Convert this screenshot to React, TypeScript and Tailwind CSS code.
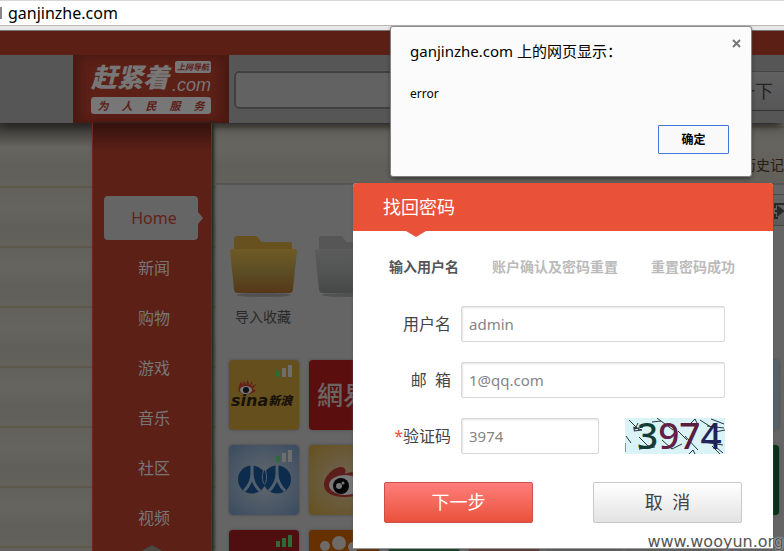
import type { ReactNode } from "react";

const cjk = "font-['Noto_Sans','Noto_Sans_CJK_SC',sans-serif]";

const navItems = ["Home", "新闻", "购物", "游戏", "音乐", "社区", "视频"];

function AddressBar() {
  return (
    <div className="h-[31px] shrink-0 border-t border-b border-t-[#d8d8d8] border-b-[#777] bg-[#e8e8e8]">
      <div className="flex h-[25px] items-center border-b border-[#b9b9b9] bg-white">
        <span className="mr-1.5 h-[12px] w-[2px] bg-[#888]" />
        <span className="text-[16px] leading-[22px] text-black">ganjinzhe.com</span>
      </div>
    </div>
  );
}

function Logo() {
  return (
    <div className="h-full w-[156px] shrink-0 bg-[#5c2017] px-[18px] pt-[2px] text-[#777] shadow-[inset_8px_0_10px_#4a1a13,inset_-8px_0_10px_#4a1a13]">
      <div className="flex h-[40px] justify-between">
        <span className="shrink-0 text-[26px] leading-[40px] font-black whitespace-nowrap italic">赶紧着</span>
        <div className="flex flex-col items-end">
          <span className="mt-[4px] rounded-[2px] bg-[#777] px-[2px] text-[8px] leading-[12px] font-bold whitespace-nowrap text-[#5c2017] italic">
            上网导航
          </span>
          <span className="font-['Liberation_Sans',sans-serif] text-[18px] leading-[24px] italic">.com</span>
        </div>
      </div>
      <div className="flex h-[17px] items-center justify-around rounded-[3px] bg-[#777] text-[11px] leading-[16px] font-bold text-[#5c2017] italic">
        {["为", "人", "民", "服", "务"].map((c) => (
          <span key={c}>{c}</span>
        ))}
      </div>
    </div>
  );
}

function Header() {
  return (
    <header className="relative shrink-0 shadow-[0_6px_8px_-3px_#222]">
      <div className="h-[24px] bg-[#5c1f16]" />
      <div className="flex h-[68px] bg-[#565656]">
        <div className="w-[73px] shrink-0" />
        <Logo />
        <div className="flex grow items-start gap-1 pt-[16px] pl-[5px]">
          <input
            aria-label="搜索"
            className="h-[38px] w-[440px] shrink-0 rounded-[5px] border-2 border-[#404040] bg-[#626262] shadow-[0_0_1px_#777]"
          />
          <button className="h-[40px] grow border-t border-b border-t-[#444] border-b-[#333] bg-linear-to-b from-[#616161] to-[#565656] pl-[23px] text-left text-[18px] whitespace-nowrap text-[#222]">
            百度一下
          </button>
        </div>
      </div>
    </header>
  );
}

function Sidebar() {
  return (
    <nav className="relative h-[430px] w-[120px] shrink-0 border-x border-[#6b2a22] bg-[#5c2017] bg-linear-to-b from-[#32120d] to-transparent to-[28px] pt-[73px] pl-[11px] shadow-[2px_0_3px_#222]">
      <ul className="flex flex-col gap-[6px]">
        {navItems.map((name, i) => (
          <li key={name}>
            <a
              href="#"
              className={
                i === 0
                  ? "relative flex h-[44px] w-[94px] items-center justify-center rounded-[4px] bg-[#656565] pl-[6px] text-[16px] text-[#642118]"
                  : "flex h-[44px] w-[94px] items-center justify-center pl-[6px] text-[16px] text-[#777]"
              }
            >
              {name}
              {i === 0 && (
                <span className="absolute top-[16px] left-full border-y-[6px] border-l-[5px] border-y-transparent border-l-[#656565]" />
              )}
            </a>
          </li>
        ))}
      </ul>
      <svg className="absolute bottom-0 left-[45px]" width="28" height="8" viewBox="0 0 28 8">
        <path d="M0 8 14 0l14 8z" fill="#4a4944" />
      </svg>
    </nav>
  );
}

function Folder({ id, top, mid, bottom, tab }: { id: string; top: string; mid: string; bottom: string; tab: string }) {
  return (
    <svg width="70" height="64" viewBox="0 0 70 64" aria-hidden="true">
      <defs>
        <linearGradient id={id} x1="0" y1="0" x2="0" y2="1">
          <stop offset="0" stopColor={top} />
          <stop offset=".5" stopColor={mid} />
          <stop offset="1" stopColor={bottom} />
        </linearGradient>
      </defs>
      <ellipse cx="35" cy="60" rx="27" ry="2" fill="#484848" opacity=".7" />
      <path d="M5 18V4q0-3 3-3h18q3 0 4 3l2 3h29q2 0 2 2v9z" fill={tab} />
      <path d="M2 14h64q2 0 2 2l-4 38q0 4-4 4H9q-4 0-4-4L1 16q0-2 1-2z" fill={`url(#${id})`} />
      <path d="M2 15h65" stroke={top} strokeWidth="1" />
    </svg>
  );
}

function Bars({ level }: { level: number }) {
  return (
    <svg className="absolute top-[5px] right-[7px]" width="16" height="12" viewBox="0 0 16 12" aria-hidden="true">
      <path d="M0 6h4v6H0z" fill="#2b6b35" />
      <path d="M6 3h4v9H6z" fill={level > 1 ? "#2b6b35" : "#6e6e6e"} />
      <path d="M12 0h4v12h-4z" fill={level > 2 ? "#2b6b35" : "#6e6e6e"} />
    </svg>
  );
}

function Tile({ color, children }: { color: string; children?: ReactNode }) {
  return (
    <a href="#" className={`relative block h-[70px] w-[70px] overflow-hidden rounded-[4px] shadow-[0_0_3px_#484848] ${color}`}>
      {children}
    </a>
  );
}

function SinaArt() {
  return (
    <div className="flex h-full flex-col">
      <svg className="mt-[20px] ml-[9px]" width="20" height="14" viewBox="0 0 20 14" aria-hidden="true">
        <path d="M1 12C-1 6 3 4 2 2c3 1 2 2 3 3 1-2 0-3 0-4 3 1 2 3 3 4 1-2 1-3 1-5 3 2 1 4 2 5 2-1 2-3 3-4 1 2-1 4-1 5 2 0 3-1 5-2-1 3-3 3-3 5 1 1 2 1 3 1-1 2-5 4-8 4z" fill="#65201a" />
        <ellipse cx="8" cy="10" rx="6" ry="4" fill="#777" />
        <circle cx="8" cy="10" r="3" fill="#111" />
      </svg>
      <div className="flex items-center pl-[2px] leading-[14px] text-[#17120c]">
        <span className="font-['DejaVu_Sans'] text-[16px] font-bold italic">sina</span>
        <span className="text-[12px] font-black whitespace-nowrap italic">新浪</span>
      </div>
    </div>
  );
}

function RenrenArt() {
  return (
    <svg className="mt-[19px] ml-[9px]" width="53" height="31" viewBox="0 0 53 31" aria-hidden="true">
      <ellipse cx="14" cy="15.500" rx="14" ry="14" fill="#0c2b4d" />
      <ellipse cx="39" cy="15.500" rx="14" ry="14" fill="#0c2b4d" />
      <path d="M14 0v9q0 10-8 18M14 9q0 10 8 18M39 0v9q0 10-8 18M39 9q0 10 8 18" fill="none" stroke="#52606d" strokeWidth="3" />
      <ellipse cx="26.500" cy="13" rx="2" ry="7" fill="#0c2b4d" stroke="#52606d" />
    </svg>
  );
}

function WeiboArt() {
  return (
    <svg className="mt-[14px] ml-[14px]" width="56" height="40" viewBox="0 0 56 40" aria-hidden="true">
      <path d="M1 26C1 17 11 8 18 8c5 0 5 4 4 7 7-3 14-2 13 4 6 1 9 4 8 9-2 9-14 10-22 10C10 38 1 34 1 26z" fill="#5d1d1a" />
      <ellipse cx="22" cy="26" rx="16" ry="10" fill="#777" />
      <circle cx="18" cy="27" r="8" fill="#050505" />
      <circle cx="16" cy="27" r="3" fill="#777" />
      <circle cx="20" cy="24" r="1.500" fill="#777" />
      <path d="M30 4c10-1 16 5 14 14" fill="none" stroke="#663614" strokeWidth="3" />
    </svg>
  );
}

function BaoArt() {
  return (
    <svg className="mt-[5px] ml-[8px]" width="48" height="30" viewBox="0 0 48 30" aria-hidden="true">
      <circle cx="8" cy="11" r="5" fill="#6d6a67" />
      <circle cx="22" cy="8" r="7" fill="#6d6a67" />
      <circle cx="36" cy="12" r="5" fill="#6d6a67" />
      <path d="M3 30q17-24 34 0z" fill="#6d6a67" />
    </svg>
  );
}

function Content() {
  return (
    <main className="min-w-0 grow pl-[4px]">
      <div className="flex h-[60px] items-center justify-end">
        <a href="#" className="mt-[22px] text-[14px] whitespace-nowrap text-[#2b1a10]">
          历史记
        </a>
      </div>
      <section className="h-[400px] border-t-2 border-[#555] bg-[#656565] pl-[13px]">
        <div className="flex h-[50px] items-start justify-end pt-[9px]">
          <button aria-label="切换" className="flex h-[32px] w-[30px] items-center justify-end border-y border-[#484848] bg-linear-to-b from-[#656565] to-[#5a5a5a]">
            <svg width="10" height="17" viewBox="0 0 10 17">
              <path d="M1 6V2h9M1 12v4h3" fill="none" stroke="#292929" strokeWidth="2" />
              <path d="M1 9h4M4 5l5 4-5 4z" fill="#292929" stroke="#292929" strokeWidth="2" />
            </svg>
          </button>
        </div>
        <div className="flex gap-[15px]">
          <div className="w-[70px]">
            <Folder id="gold" top="#705b25" mid="#5c4e24" bottom="#573719" tab="#67521f" />
            <div className="mt-[8px] pl-[6px] text-[14px] leading-[20px] text-[#292929]">导入收藏</div>
          </div>
          <div className="w-[70px]">
            <Folder id="grey" top="#5c5c5c" mid="#535454" bottom="#464747" tab="#565656" />
          </div>
        </div>
        <div className="mt-[33px] grid grid-cols-[repeat(auto-fill,70px)] gap-x-[10px] gap-y-[15px]">
          <Tile color="bg-[#65501d]">
            <Bars level={1} />
            <SinaArt />
          </Tile>
          <Tile color="bg-[#5a0e0e]">
            <span className="ml-[8px] block text-[26px] leading-[70px] font-medium whitespace-nowrap text-[#6d6464]">網易</span>
          </Tile>
          <Tile color="bg-[#5a0e0e]" />
          <Tile color="bg-[#65501d]" />
          <Tile color="bg-[#5c5c5c]" />
          <Tile color="bg-[#5c5c5c]" />
          <Tile color="bg-linear-to-b from-[#53636b] to-[#566067]" />
          <Tile color="bg-radial from-[#64686c] to-[#3a4c60]">
            <Bars level={1} />
            <RenrenArt />
          </Tile>
          <Tile color="bg-radial from-[#6e6452] to-[#65501d]">
            <WeiboArt />
          </Tile>
          <Tile color="bg-[#65501d]" />
          <Tile color="bg-[#5a0e0e]" />
          <Tile color="bg-[#5c5c5c]" />
          <Tile color="bg-[#5c5c5c]" />
          <Tile color="bg-[#06321a]" />
          <Tile color="bg-[#4f0e10]">
            <Bars level={3} />
          </Tile>
          <Tile color="bg-[#663000]">
            <BaoArt />
          </Tile>
          <Tile color="bg-[#0d3f22]" />
          <Tile color="bg-[#5f3a35]" />
          <Tile color="bg-[#5c5c5c]" />
          <Tile color="bg-[#606060]" />
        </div>
      </section>
    </main>
  );
}

function Captcha() {
  return (
    <svg width="100" height="36" viewBox="0 0 100 36" role="img" aria-label="3974">
      <rect width="100" height="36" fill="#d9f3f6" />
      <path
        d="M4 2l10 10M8 9l9 3-8 1 4-8M1 18l5 7M0 25v9M14 19l9 9M27 4l9-1M32 0l16 12M24 28l-10 3 16-2M37 22l10 9M60 18l13 14M47 31l10-5M66 5l4-4 3 6M64 36l4-4 2 4M75 2l11 7M86 1l13 5M82 8l17 2M90 14l10-2M78 24l20 3M92 30l6 5M87 28l8 8M53 13l9 9M8 11l10-2"
        fill="none"
        stroke="#26363e"
        strokeWidth="1"
      />
      <text x="12" y="31" fontFamily="Noto Sans" fontSize="37" fontWeight="500" fill="#163b36">
        3<tspan fill="#632044">9</tspan>
        <tspan fill="#5b1d3d">7</tspan>
        <tspan fill="#1f2359">4</tspan>
      </text>
    </svg>
  );
}

const labelClass = "w-[67px] shrink-0 text-right text-[16px] leading-[36px] whitespace-pre text-[#444]";
const inputClass =
  "h-[36px] rounded-[2px] border border-[#d8d8d8] px-[7px] text-[15px] text-[#858585] shadow-[inset_1px_1px_2px_#e5e5e5] outline-none";

function PasswordModal() {
  return (
    <form
      className="absolute top-[183px] left-[353px] z-10 w-[420px] rounded-t-[4px] border-b border-[#999] bg-white shadow-[0_0_2px_#555]"
      onSubmit={(e) => e.preventDefault()}
    >
      <div className="relative h-[48px] rounded-t-[4px] bg-[#e95139] pl-[30px]">
        <h2 className="text-[18px] leading-[48px] text-white">找回密码</h2>
        <span className="absolute top-full left-[53px] border-x-[10px] border-t-[6px] border-x-transparent border-t-[#e95139]" />
      </div>
      <div className="px-[31px] pt-[26px] pb-[25px]">
        <ol className="flex gap-[33px] pl-[5px] text-[14px] leading-[20px] font-bold whitespace-nowrap text-[#bbb]">
          <li className="text-[#555]">输入用户名</li>
          <li>账户确认及密码重置</li>
          <li>重置密码成功</li>
        </ol>
        <div className="mt-[29px] flex flex-col gap-[20px]">
          <div className="flex gap-[10px]">
            <label htmlFor="user" className={labelClass}>用户名</label>
            <input id="user" defaultValue="admin" className={`${inputClass} w-[264px]`} />
          </div>
          <div className="flex gap-[10px]">
            <label htmlFor="mail" className={labelClass}>{"邮  箱"}</label>
            <input id="mail" defaultValue="1@qq.com" className={`${inputClass} w-[264px]`} />
          </div>
          <div className="flex gap-[10px]">
            <label htmlFor="code" className={labelClass}>
              <span className="text-[#e95139]">*</span>验证码
            </label>
            <div className="flex w-[264px] justify-between">
              <input id="code" defaultValue="3974" className={`${inputClass} w-[138px]`} />
              <Captcha />
            </div>
          </div>
        </div>
        <div className="mt-[28px] flex gap-[60px]">
          <button className="h-[41px] w-[149px] rounded-[2px] border border-[#c9504b] bg-linear-to-b from-[#ff7d7b] to-[#e95139] text-[18px] text-white">
            下一步
          </button>
          <button type="button" className="h-[41px] w-[149px] rounded-[2px] border border-[#c8c8c8] bg-linear-to-b from-white to-[#e3e3e3] text-[18px] whitespace-pre text-[#444]">
            {"取  消"}
          </button>
        </div>
      </div>
    </form>
  );
}

function AlertDialog() {
  return (
    <div role="alertdialog" aria-label="error" className="absolute top-[27px] left-[391px] z-20 h-[149px] w-[360px] rounded-[2px] bg-[#fbfbfb] px-[19px] pt-[12px] text-black shadow-[0_0_1px_1px_#888,0_2px_4px_#222]">
      <div className="text-[15px] leading-[24px]">ganjinzhe.com 上的网页显示：</div>
      <div className="mt-[21px] text-[12px] leading-[20px]">error</div>
      <div className="mt-[21px] flex justify-end pr-[3px]">
        <button className="h-[29px] w-[71px] rounded-[1px] border border-[#4077d8] bg-[#f9f9f9] text-[12px] font-bold">确定</button>
      </div>
      <button aria-label="关闭" className="absolute top-[12px] right-[10px]">
        <svg width="9" height="9" viewBox="0 0 9 9">
          <path d="M1 1l7 7M8 1 1 8" stroke="#777" strokeWidth="2" />
        </svg>
      </button>
    </div>
  );
}

export default function App() {
  return (
    <div className={`relative flex h-screen flex-col overflow-hidden ${cjk}`}>
      <AddressBar />
      <Header />
      <div className="flex min-h-0 grow bg-[#62615b] bg-[repeating-linear-gradient(to_bottom,#62615b_0px,#65645e_20px,#605f59_40px,#62615b_58px,#5d5a4c_58px,#5d5a4c_60px)] bg-[position:0_5px] bg-[length:100%_60px]">
        <div className="w-[92px] shrink-0 bg-linear-to-b from-[#33322f] to-transparent to-[24px]" />
        <Sidebar />
        <Content />
      </div>
      <PasswordModal />
      <AlertDialog />
      <div className="absolute right-0 bottom-[-2px] z-30 font-['DejaVu_Sans',sans-serif] text-[16px] leading-[22px] text-[#555] [text-shadow:0_0_2px_#fff]">
        www.wooyun.org
      </div>
    </div>
  );
}
